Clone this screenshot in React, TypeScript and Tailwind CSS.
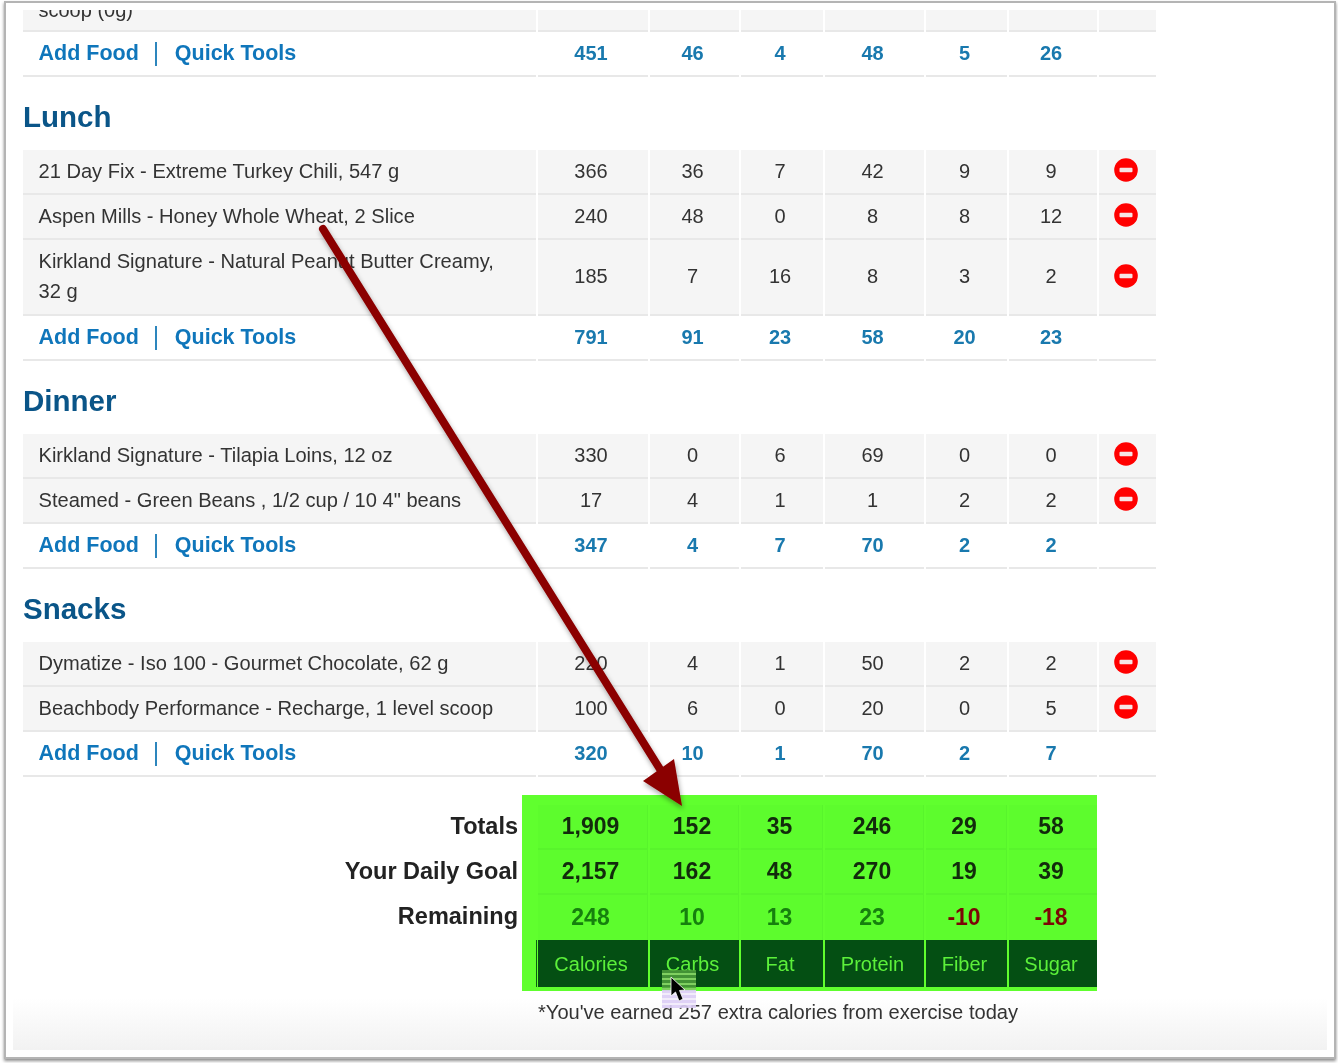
const nutrients = ['Calories', 'Carbs', 'Fat', 'Protein', 'Fiber', 'Sugar'];

const gridCols = 'grid grid-cols-[513px_110px_89px_82px_99px_81px_88px_57px] gap-x-[2px]';
const totalsCols = 'grid grid-cols-[110px_89px_82px_99px_81px_88px] gap-x-[2px]';

interface Food {
  name: string;
  values: string[];
  tall?: boolean;
}

interface Meal {
  title: string;
  foods: Food[];
  sums: string[];
}

const meals: Meal[] = [
  {
    title: 'Lunch',
    foods: [
      { name: '21 Day Fix - Extreme Turkey Chili, 547 g', values: ['366', '36', '7', '42', '9', '9'] },
      { name: 'Aspen Mills - Honey Whole Wheat, 2 Slice', values: ['240', '48', '0', '8', '8', '12'] },
      {
        name: 'Kirkland Signature - Natural Peanut Butter Creamy, 32 g',
        values: ['185', '7', '16', '8', '3', '2'],
        tall: true,
      },
    ],
    sums: ['791', '91', '23', '58', '20', '23'],
  },
  {
    title: 'Dinner',
    foods: [
      { name: 'Kirkland Signature - Tilapia Loins, 12 oz', values: ['330', '0', '6', '69', '0', '0'] },
      { name: 'Steamed - Green Beans , 1/2 cup / 10 4" beans', values: ['17', '4', '1', '1', '2', '2'] },
    ],
    sums: ['347', '4', '7', '70', '2', '2'],
  },
  {
    title: 'Snacks',
    foods: [
      { name: 'Dymatize - Iso 100 - Gourmet Chocolate, 62 g', values: ['220', '4', '1', '50', '2', '2'] },
      { name: 'Beachbody Performance - Recharge, 1 level scoop', values: ['100', '6', '0', '20', '0', '5'] },
    ],
    sums: ['320', '10', '1', '70', '2', '7'],
  },
];

const totals = [
  { label: 'Totals', values: ['1,909', '152', '35', '246', '29', '58'] },
  { label: 'Your Daily Goal', values: ['2,157', '162', '48', '270', '19', '39'] },
];
const remaining = ['248', '10', '13', '23', '-10', '-18'];

const RemoveIcon = () => (
  <svg width="24" height="24" viewBox="0 0 24 24">
    <circle cx="12" cy="12" r="11.8" fill="#ff0000" />
    <rect x="5.5" y="9.8" width="13" height="4.4" rx="1" fill="#f6e4e4" />
  </svg>
);

const SummaryRow = ({ sums }: { sums: string[] }) => (
  <div className={`${gridCols} h-[45px]`}>
    <div className="flex items-center border-b-2 border-[#e8e8e8] pl-[15.5px] text-[21.5px] font-bold text-[#0f76bb]">
      <span>Add Food</span>
      <span className="mx-[16px] h-[24px] w-[2px] bg-[#2d86bd]" />
      <span className="ml-[2px]">Quick Tools</span>
    </div>
    {sums.map((v, i) => (
      <div key={i} className="flex items-center justify-center border-b-2 border-[#e8e8e8] pr-1 pb-[2px] text-[20px] font-bold text-[#1979ae]">
        {v}
      </div>
    ))}
    <div className="border-b-2 border-[#e8e8e8]" />
  </div>
);

const FoodRow = ({ food }: { food: Food }) => (
  <div className={`${gridCols} ${food.tall ? 'h-[76px]' : 'h-[45px]'}`}>
    <div className="flex items-center border-b-2 border-[#e8e8e8] bg-[#f5f5f5] pr-6 pb-[2px] pl-[15.5px] text-[20.1px] leading-[30px]">
      {food.name}
    </div>
    {food.values.map((v, i) => (
      <div key={i} className="flex items-center justify-center border-b-2 border-[#e8e8e8] bg-[#f5f5f5] pr-1 pb-[2px]">
        {v}
      </div>
    ))}
    <div className="flex items-center justify-center border-b-2 border-[#e8e8e8] bg-[#f5f5f5] pr-[3px] pb-[3px]">
      <RemoveIcon />
    </div>
  </div>
);

const TotalsPanel = () => (
  <div className="mt-[18px] flex">
    <div className="flex w-[495px] flex-col items-end pt-[9px] text-[23.5px] font-bold text-[#222222]">
      {totals.map((row) => (
        <div key={row.label} className="flex h-[45px] items-center">
          {row.label}
        </div>
      ))}
      <div className="flex h-[45px] items-center">Remaining</div>
    </div>
    <div className="ml-[4px] h-[196px] w-[575px] bg-[#60ff2e] pt-[10px] pl-[16px]">
      {totals.map((row) => (
        <div key={row.label} className={`${totalsCols} h-[45px]`}>
          {row.values.map((v, i) => (
            <div
              key={i}
              className="flex items-center justify-center border-r border-b-2 border-[#58f42c] bg-[#5dfc2d] pr-1 text-[23px] font-bold text-[#122b0c] last:border-r-0"
            >
              {v}
            </div>
          ))}
        </div>
      ))}
      <div className={`${totalsCols} h-[45px]`}>
        {remaining.map((v, i) => (
          <div
            key={i}
            className={`flex items-center justify-center border-r border-[#58f42c] bg-[#5dfc2d] pr-1 text-[23px] font-bold last:border-r-0 ${i > 3 ? 'text-[#7c0606]' : 'text-[#16800e]'}`}
          >
            {v}
          </div>
        ))}
      </div>
      <div className={`${totalsCols} -ml-[2px] h-[47px] border-l border-[#0b5c14] pl-[1px]`}>
        {nutrients.map((n) => (
          <div key={n} className="flex items-center justify-center bg-[#044f13] pr-1 text-[20px] text-[#5cf03a]">
            {n}
          </div>
        ))}
      </div>
    </div>
  </div>
);

// arrow + cursor sit on top of the table, they were annotated on the screenshot
const Annotations = () => (
  <svg className="pointer-events-none absolute top-0 left-0" width="1338" height="1063" viewBox="0 0 1338 1063">
    <defs>
      <filter id="arrowShadow" x="-10%" y="-10%" width="120%" height="120%">
        <feDropShadow dx="1" dy="3" stdDeviation="2.5" floodColor="#000" floodOpacity="0.35" />
      </filter>
    </defs>
    <g filter="url(#arrowShadow)" fill="#8b0404">
      <line x1="323" y1="229" x2="663" y2="774" stroke="#8b0404" strokeWidth="8" strokeLinecap="round" />
      <polygon points="682,806 643,781 674,759" />
    </g>
    <rect x="662" y="970" width="34" height="20" fill="#4f9f3c" opacity="0.85" />
    <rect x="662" y="990" width="34" height="18" fill="#dccdf5" opacity="0.9" />
    {[973, 978, 983, 988, 993, 998, 1003].map((y) => (
      <rect key={y} x="662" y={y} width="34" height="2" fill={y < 990 ? '#7fd060' : '#f2ecfb'} />
    ))}
    <path d="M671 977 L671 996 L675.5 992 L679 1001 L683 999 L679.5 990.5 L685 990 Z" fill="#000" stroke="#fff" strokeWidth="0.8" />
  </svg>
);

export default function App() {
  return (
    <div className="relative h-[1063px] w-full overflow-hidden bg-white pt-[1px] pr-[2px] pl-[4px] [font-family:'Liberation_Sans',Arial,sans-serif] text-[20px] text-[#333333] blur-[0.4px]">
      <div className="h-[1058px] border-2 border-[#b4b4b4] bg-white p-[7px] shadow-[0_2px_3px_rgba(0,0,0,0.45)]">
        <div className="h-full overflow-hidden bg-linear-to-b from-white from-[95%] to-[#f2f2f2] pl-[10px]">
          <div className={`${gridCols} h-[22px]`}>
            <div className="h-[22px] overflow-hidden border-b-2 border-[#e8e8e8] bg-[#f5f5f5] pl-[15.5px]">
              <div className="-mt-[15px] leading-[30px]">scoop (0g)</div>
            </div>
            {[0, 1, 2, 3, 4, 5, 6].map((i) => (
              <div key={i} className="border-b-2 border-[#e8e8e8] bg-[#f5f5f5]" />
            ))}
          </div>
          <SummaryRow sums={['451', '46', '4', '48', '5', '26']} />
          {meals.map((meal) => (
            <section key={meal.title}>
              <h2 className="flex h-[73px] items-center pt-[7px] text-[29.5px] font-bold text-[#0a5588]">{meal.title}</h2>
              {meal.foods.map((food) => (
                <FoodRow key={food.name} food={food} />
              ))}
              <SummaryRow sums={meal.sums} />
            </section>
          ))}
          <TotalsPanel />
          <p className="mt-[7px] pl-[515px] text-[20.1px] leading-[28px]">*You've earned 257 extra calories from exercise today</p>
        </div>
      </div>
      <Annotations />
    </div>
  );
}
